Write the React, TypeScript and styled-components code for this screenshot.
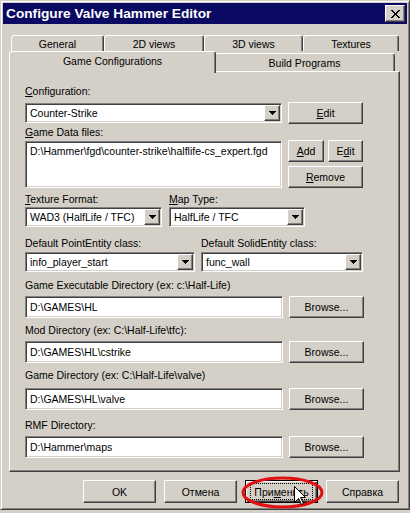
import React from "react";
import styled, { createGlobalStyle, css } from "styled-components";

const face = "#d4d0c8";

const GlobalStyle = createGlobalStyle`
  html, body {
    margin: 0;
    padding: 0;
    background: ${face};
  }
  body {
    font-family: "Liberation Sans", Arial, sans-serif;
    font-size: 10.5px;
    color: #000;
  }
`;

// classic 3D bevels
const raised = css`
  border: 1px solid;
  border-color: #fff #404040 #404040 #fff;
  box-shadow: inset -1px -1px #808080, inset 1px 1px ${face};
`;

const sunken = css`
  border: 1px solid;
  border-color: #808080 #fff #fff #808080;
  box-shadow: inset 1px 1px #404040, inset -1px -1px ${face};
`;

const Window = styled.div`
  box-sizing: border-box;
  width: 410px;
  height: 510px;
  padding: 2px;
  background: ${face};
  border: 1px solid;
  border-color: ${face} #404040 #404040 ${face};
  box-shadow: inset 1px 1px #fff, inset -1px -1px #808080;
  display: flex;
  flex-direction: column;
`;

const TitleBar = styled.div`
  flex: none;
  height: 21px;
  background: #0a0a62;
  display: flex;
  align-items: center;
  justify-content: space-between;
  padding: 0 2px 0 3px;
`;

const Title = styled.span`
  color: #fff;
  font-weight: bold;
  font-size: 13.7px;
  white-space: nowrap;
`;

const CloseButton = styled.div`
  ${raised};
  box-sizing: border-box;
  width: 20px;
  height: 17px;
  background: ${face};
  display: flex;
  align-items: center;
  justify-content: center;
`;

const Body = styled.div`
  flex: 1;
  padding: 11px 7px 0 6px;
  display: flex;
  flex-direction: column;
`;

const TabRow = styled.div<{ $front?: boolean }>`
  display: flex;
  align-items: ${({ $front }) => ($front ? "flex-end" : "flex-start")};
  height: ${({ $front }) => ($front ? 20 : 16)}px;
  padding-left: 2px;
`;

const Tab = styled.div<{ $w: number; $h: number; $active?: boolean }>`
  box-sizing: border-box;
  flex: none;
  width: ${({ $w }) => $w}px;
  height: ${({ $h }) => $h}px;
  background: ${face};
  border: 1px solid;
  border-bottom: none;
  border-color: #fff #404040 transparent #fff;
  border-radius: 3px 3px 0 0;
  box-shadow: inset -1px 0 #808080;
  display: flex;
  align-items: center;
  justify-content: center;
  white-space: nowrap;

  ${({ $active }) =>
    $active &&
    css`
      position: relative;
      z-index: 1;
      margin: 0 -2px -2px;
      padding-bottom: 3px;
    `}
`;

const Panel = styled.div`
  box-sizing: border-box;
  border: 1px solid;
  border-color: #fff #404040 #404040 #fff;
  box-shadow: inset -1px -1px #808080, inset 1px 1px ${face};
  padding: 13px 0 13px 15px;
  display: flex;
  flex-direction: column;
`;

const Group = styled.div<{ $mt?: number; $w?: number }>`
  margin-top: ${({ $mt }) => $mt ?? 0}px;
  width: ${({ $w }) => ($w ? `${$w}px` : "auto")};
  flex: none;
`;

const Label = styled.div<{ $gap?: number }>`
  height: 13px;
  line-height: 13px;
  margin-bottom: ${({ $gap }) => $gap ?? 4}px;
  white-space: nowrap;
`;

const Row = styled.div<{ $gap?: number; $align?: string }>`
  display: flex;
  align-items: ${({ $align }) => $align ?? "center"};
  gap: ${({ $gap }) => $gap ?? 6}px;
`;

const Field = styled.div<{ $w: number; $h?: number }>`
  ${sunken};
  box-sizing: border-box;
  width: ${({ $w }) => $w}px;
  height: ${({ $h }) => $h ?? 22}px;
  background: #fff;
  padding: 0 4px;
  display: flex;
  align-items: center;
  white-space: nowrap;
  overflow: hidden;
`;

const ListBox = styled.div<{ $w: number; $h: number }>`
  ${sunken};
  box-sizing: border-box;
  width: ${({ $w }) => $w}px;
  height: ${({ $h }) => $h}px;
  margin-top: 1px;
  background: #fff;
  padding: 3px 4px;
  line-height: 13px;
  white-space: nowrap;
  overflow: hidden;
`;

const ComboBox = styled.div<{ $w: number }>`
  ${sunken};
  box-sizing: border-box;
  width: ${({ $w }) => $w}px;
  height: 20px;
  background: #fff;
  padding: 1px;
  display: flex;
  align-items: center;
`;

const ComboText = styled.span`
  flex: 1;
  padding-left: 3px;
  white-space: nowrap;
  overflow: hidden;
`;

const ArrowButton = styled.span`
  ${raised};
  box-sizing: border-box;
  flex: none;
  width: 16px;
  height: 16px;
  background: ${face};
  display: flex;
  align-items: center;
  justify-content: center;
`;

const Button = styled.div<{ $w: number; $h?: number }>`
  ${raised};
  box-sizing: border-box;
  flex: none;
  width: ${({ $w }) => $w}px;
  height: ${({ $h }) => $h ?? 22}px;
  background: ${face};
  display: flex;
  align-items: center;
  justify-content: center;
  white-space: nowrap;
`;

const ButtonStack = styled.div`
  display: flex;
  flex-direction: column;
  gap: 4px;
`;

const Footer = styled.div`
  display: flex;
  justify-content: flex-end;
  gap: 8px;
  margin-top: 8px;
  padding-right: 1px;
`;

const DefaultButton = styled.div`
  position: relative;
  box-sizing: border-box;
  width: 73px;
  height: 23px;
  background: ${face};
  border: 1px solid #000;
  box-shadow: inset 1px 1px #fff, inset -1px -1px #404040, inset -2px -2px #808080;
  display: flex;
  align-items: center;
  justify-content: center;
`;

const FocusRing = styled.span`
  box-sizing: border-box;
  width: 61px;
  height: 15px;
  outline: 1px dotted #000;
  display: flex;
  align-items: center;
  justify-content: center;
`;

// hand-drawn red circle and pointer over the Apply button
const Marker = styled.svg`
  position: absolute;
  left: -5px;
  top: -5px;
  overflow: visible;
  pointer-events: none;
`;

const Pointer = styled.svg`
  position: absolute;
  left: 48px;
  top: 5px;
  overflow: visible;
`;

const Arrow = () => (
  <svg width="7" height="4" viewBox="0 0 7 4" shapeRendering="crispEdges">
    <path d="M0 0h7v1h-1v1h-1v1h-1v1h-1v-1h-1v-1h-1v-1h-1z" fill="#000" />
  </svg>
);

const Combo = ({ w, value }: { w: number; value: string }) => (
  <ComboBox $w={w}>
    <ComboText>{value}</ComboText>
    <ArrowButton>
      <Arrow />
    </ArrowButton>
  </ComboBox>
);

const DirectoryField = ({ label, value, mt, gap }: { label: string; value: string; mt: number; gap?: number }) => (
  <Group $mt={mt}>
    <Label $gap={gap}>{label}</Label>
    <Row>
      <Field $w={258}>{value}</Field>
      <Button $w={75}>Browse...</Button>
    </Row>
  </Group>
);

const App = () => {
  return (
    <>
      <GlobalStyle />
      <Window>
        <TitleBar>
          <Title>Configure Valve Hammer Editor</Title>
          <CloseButton>
            <svg width="9" height="8" viewBox="0 0 9 8" shapeRendering="crispEdges">
              <path d="M0 0h2l2.5 3 2.5-3h2l-3.5 4 3.5 4h-2l-2.5-3-2.5 3h-2l3.5-4z" fill="#000" />
            </svg>
          </CloseButton>
        </TitleBar>

        <Body>
          <TabRow>
            <Tab $w={93} $h={16}>General</Tab>
            <Tab $w={100} $h={16}>2D views</Tab>
            <Tab $w={99} $h={16}>3D views</Tab>
            <Tab $w={96} $h={16}>Textures</Tab>
          </TabRow>
          <TabRow $front>
            <Tab $w={207} $h={22} $active>
              Game Configurations
            </Tab>
            <Tab $w={181} $h={18}>Build Programs</Tab>
          </TabRow>

          <Panel>
            <Group>
              <Label>
                <u>C</u>onfiguration:
              </Label>
              <Row>
                <Combo w={257} value="Counter-Strike" />
                <Button $w={75}>
                  <u>E</u>dit
                </Button>
              </Row>
            </Group>

            <Group $mt={2}>
              <Label $gap={1}>
                <u>G</u>ame Data files:
              </Label>
              <Row $align="flex-start">
                <ListBox $w={257} $h={47}>
                  D:\Hammer\fgd\counter-strike\halflife-cs_expert.fgd
                </ListBox>
                <ButtonStack>
                  <Row $gap={4}>
                    <Button $w={36}>
                      <u>A</u>dd
                    </Button>
                    <Button $w={35}>
                      E<u>d</u>it
                    </Button>
                  </Row>
                  <Button $w={75}>
                    <u>R</u>emove
                  </Button>
                </ButtonStack>
              </Row>
            </Group>

            <Row $gap={7} $align="flex-start">
              <Group $mt={5} $w={137}>
                <Label $gap={1}>
                  <u>T</u>exture Format:
                </Label>
                <Combo w={137} value="WAD3 (HalfLife / TFC)" />
              </Group>
              <Group $mt={5} $w={136}>
                <Label $gap={1}>
                  <u>M</u>ap Type:
                </Label>
                <Combo w={136} value="HalfLife / TFC" />
              </Group>
            </Row>

            <Row $gap={6} $align="flex-start">
              <Group $mt={10} $w={170}>
                <Label $gap={2}>Default PointEntity class:</Label>
                <Combo w={170} value="info_player_start" />
              </Group>
              <Group $mt={10} $w={162}>
                <Label $gap={2}>Default SolidEntity class:</Label>
                <Combo w={162} value="func_wall" />
              </Group>
            </Row>

            <DirectoryField mt={7} label="Game Executable Directory (ex: c:\Half-Life)" value="D:\GAMES\HL" />
            <DirectoryField mt={6} label="Mod Directory (ex: C:\Half-Life\tfc):" value="D:\GAMES\HL\cstrike" />
            <DirectoryField mt={6} gap={6} label="Game Directory (ex: C:\Half-Life\valve)" value="D:\GAMES\HL\valve" />
            <DirectoryField mt={9} label="RMF Directory:" value="D:\Hammer\maps" />
          </Panel>

          <Footer>
            <Button $w={73} $h={23}>OK</Button>
            <Button $w={73} $h={23}>Отмена</Button>
            <DefaultButton>
              <FocusRing>
                При<u>м</u>енить
              </FocusRing>
              <Marker width="83" height="33" viewBox="0 0 83 33">
                <ellipse cx="41.5" cy="16.5" rx="39.5" ry="14.5" fill="none" stroke="#e01010" strokeWidth="3" />
              </Marker>
              <Pointer width="12" height="19" viewBox="0 0 12 19">
                <path
                  d="M0.5 0.5L0.5 16.5L4.5 12.5L7.5 18.5L9.5 17.5L6.5 11.5L11.5 11.5Z"
                  fill="#fff"
                  stroke="#000"
                  strokeWidth="1"
                  strokeLinejoin="miter"
                />
              </Pointer>
            </DefaultButton>
            <Button $w={73} $h={23}>Справка</Button>
          </Footer>
        </Body>
      </Window>
    </>
  );
};

export default App;
